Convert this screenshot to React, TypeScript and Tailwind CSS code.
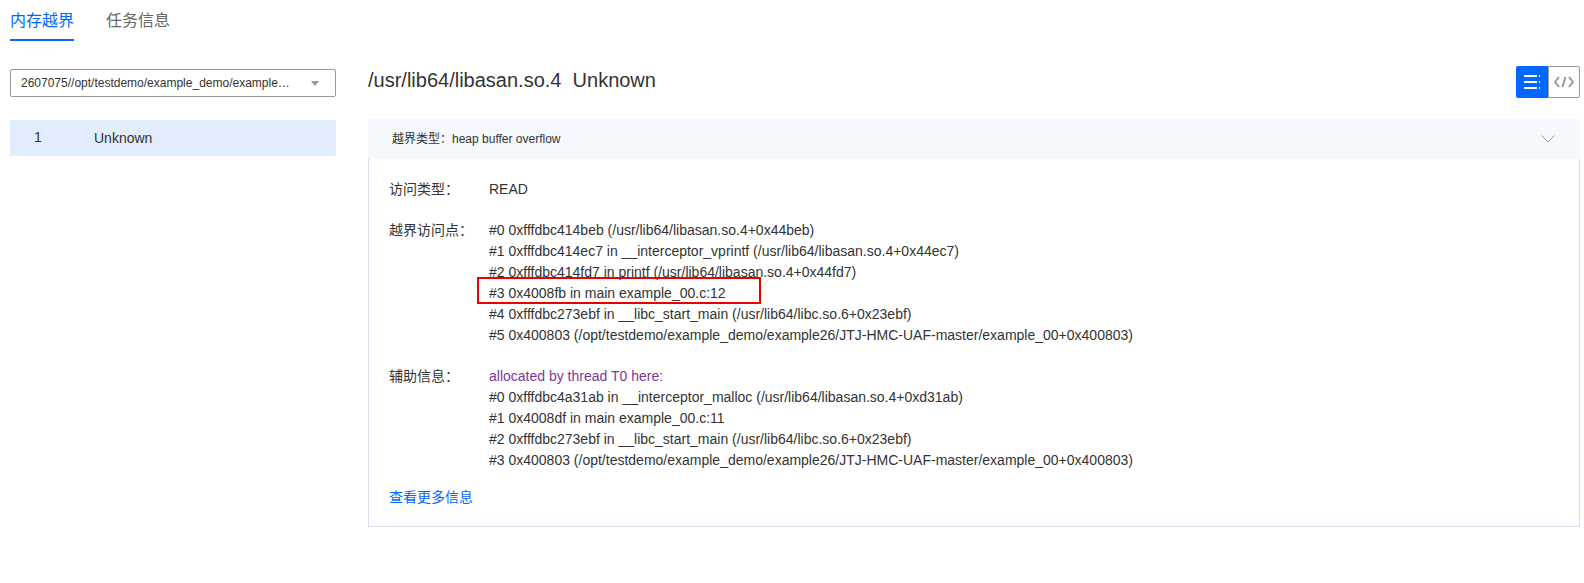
import React from 'react';

const point = [
  '#0 0xfffdbc414beb (/usr/lib64/libasan.so.4+0x44beb)',
  '#1 0xfffdbc414ec7 in __interceptor_vprintf (/usr/lib64/libasan.so.4+0x44ec7)',
  '#2 0xfffdbc414fd7 in printf (/usr/lib64/libasan.so.4+0x44fd7)',
  '#3 0x4008fb in main example_00.c:12',
  '#4 0xfffdbc273ebf in __libc_start_main (/usr/lib64/libc.so.6+0x23ebf)',
  '#5 0x400803 (/opt/testdemo/example_demo/example26/JTJ-HMC-UAF-master/example_00+0x400803)',
];

const extra = [
  '#0 0xfffdbc4a31ab in __interceptor_malloc (/usr/lib64/libasan.so.4+0xd31ab)',
  '#1 0x4008df in main example_00.c:11',
  '#2 0xfffdbc273ebf in __libc_start_main (/usr/lib64/libc.so.6+0x23ebf)',
  '#3 0x400803 (/opt/testdemo/example_demo/example26/JTJ-HMC-UAF-master/example_00+0x400803)',
];

const App = () => {
  return (
    <div className="h-[583px] bg-white text-[#222] font-['Liberation_Sans','Noto_Sans_CJK_SC',sans-serif] overflow-hidden">
      {/* Tabs */}
      <div className="flex gap-8 pl-2.5 h-[41px]">
        <div className="w-16 h-[41px] border-b-2 border-[#0067ff] text-[#0067ff] text-base leading-[41px]">内存越界</div>
        <div className="w-16 text-[#666] text-base leading-[41px]">任务信息</div>
      </div>

      <div className="flex pl-2.5 pr-1 pt-[25px]">
        {/* Left column */}
        <div className="w-[326px] shrink-0 pt-[3px]">
          <div className="h-7 flex items-center justify-between border border-[#999] rounded-[2px] pl-2.5 pr-4">
            <span className="text-xs text-[#333]">2607075//opt/testdemo/example_demo/example…</span>
            <span className="w-0 h-0 border-x-4 border-t-[5px] border-x-transparent border-t-[#999]" />
          </div>
          <div className="mt-[23px] h-9 flex items-center bg-[#e1edfd] text-sm text-[#333]">
            <span className="w-[84px] pl-[24px] -mt-0.5">1</span>
            <span>Unknown</span>
          </div>
        </div>

        {/* Right column */}
        <div className="ml-8 flex-1 min-w-0">
          <div className="h-[53px] flex justify-between">
            <h1 className="text-xl leading-[28px] text-[#333] whitespace-pre">/usr/lib64/libasan.so.4  Unknown</h1>
            <div className="flex h-8">
              <div className="w-8 bg-[#0067ff] rounded-l-[2px] flex items-center justify-center">
                <svg width="16" height="14" viewBox="0 0 16 14" fill="none" stroke="#fff" strokeWidth="2">
                  <path d="M0 1h13M15 1h1M0 7h13M15 7h1M0 13h13M15 13h1" />
                </svg>
              </div>
              <div className="w-8 border border-[#999] rounded-r-[2px] flex items-center justify-center">
                <svg width="20" height="12" viewBox="0 0 20 12" fill="none" stroke="#999" strokeWidth="2">
                  <path d="M5 1 1 6l4 5M15 1l4 5-4 5M11.5 1 8.5 11" />
                </svg>
              </div>
            </div>
          </div>

          <div className="h-10 bg-[#f5f8fd] flex items-center justify-between pl-6 pr-[25px] text-xs text-[#333]">
            <span>越界类型：heap buffer overflow</span>
            <svg width="14" height="8" viewBox="0 0 14 8" fill="none" stroke="#999" strokeWidth="1">
              <path d="M0.5 0.5 7 7l6.5-6.5" />
            </svg>
          </div>

          <div className="relative h-[368px] border border-t-0 border-[#d8deee] pl-5 pt-[20px] text-sm leading-[21px] text-[#333]">
            <div className="flex">
              <span className="w-[100px] shrink-0">访问类型：</span>
              <span>READ</span>
            </div>
            <div className="flex mt-5">
              <span className="w-[100px] shrink-0">越界访问点：</span>
              <div>
                {point.map(line => (
                  <div key={line}>{line}</div>
                ))}
              </div>
            </div>
            <div className="flex mt-5">
              <span className="w-[100px] shrink-0">辅助信息：</span>
              <div>
                <div className="text-[#80379b]">allocated by thread T0 here:</div>
                {extra.map(line => (
                  <div key={line}>{line}</div>
                ))}
              </div>
            </div>
            <div className="mt-4 text-[#0067ff]">查看更多信息</div>

            {/* Red highlight box */}
            <div className="absolute left-[108px] top-[118px] w-[284px] h-[27px] border-2 border-[#ee0000]" />
          </div>
        </div>
      </div>
    </div>
  );
};

export default App;
